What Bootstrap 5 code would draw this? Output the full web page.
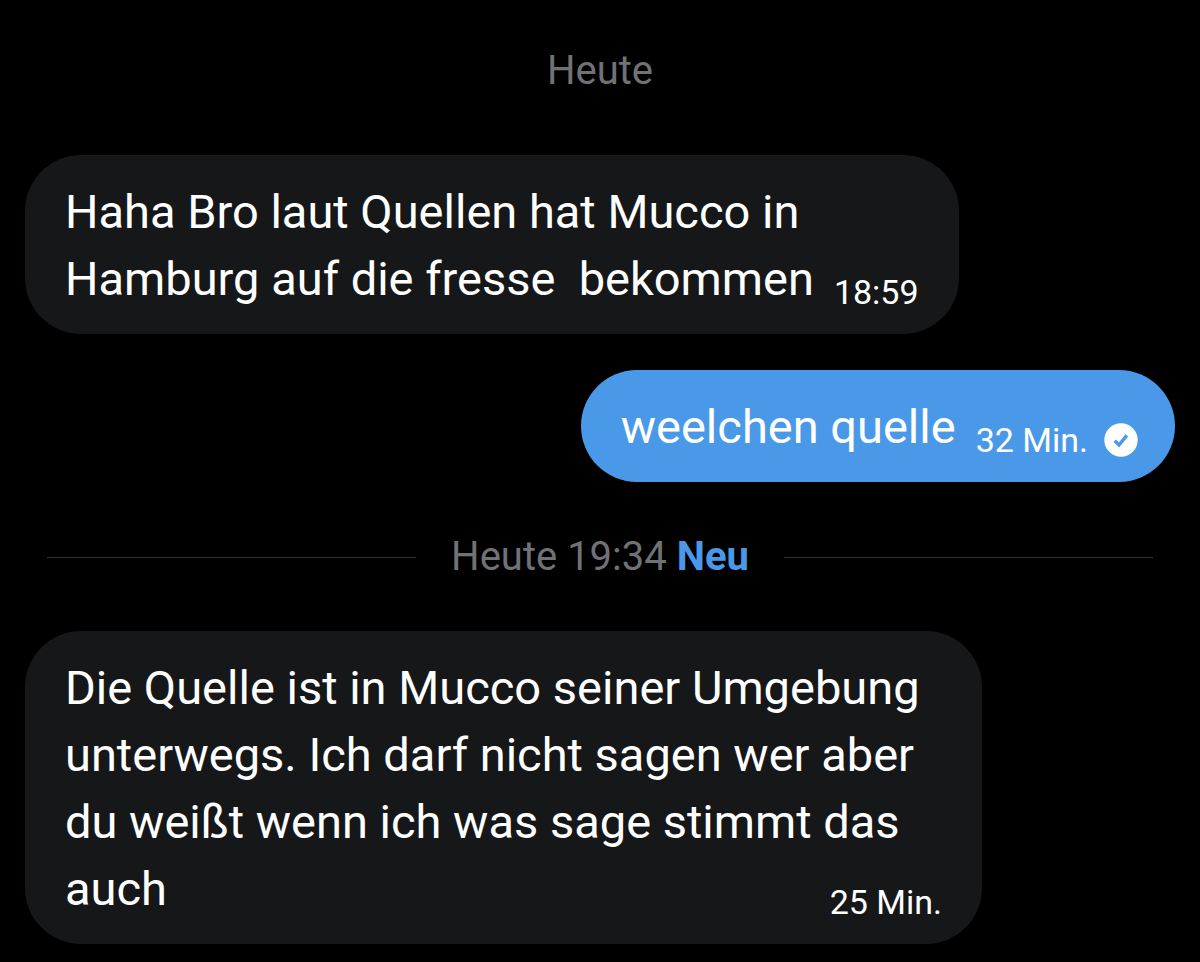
<!DOCTYPE html>
<html lang="de">
<head>
<meta charset="utf-8">
<meta name="viewport" content="width=device-width, initial-scale=1">
<title>Nachrichten</title>
<link href="https://cdn.jsdelivr.net/npm/bootstrap@5.3.0/dist/css/bootstrap.min.css" rel="stylesheet">
<style>
  body { background: #000; color: #fff; font-family: Roboto, "Liberation Sans", sans-serif; }
  .chat { padding: 47px 25px 18px; }
  .day-label { color: #717276; font-size: 40px; line-height: 48px; }
  .day-first { margin-bottom: 60px; }
  .day-new { margin: 51px 22px 50px; gap: 35px; }
  .day-new hr { border-top: 1px solid #2f3133; opacity: 1; }
  .new-tag { color: #4a99e9; }
  .bubble { max-width: calc(100% - 193px); padding: 23px 40px 22px; border-radius: 56px; font-size: 47px; line-height: 67px; }
  .bubble-in { background: #161719; }
  .bubble-out { background: #4a99e9; margin-top: 36px; padding-right: 37px; }
  .last-line { column-gap: 20px; }
  .stamp { font-size: 34px; line-height: 40px; }
  .stamp svg { width: 34px; height: 34px; margin-left: 16px; }
</style>
</head>
<body>
<main class="chat d-flex flex-column">
  <div class="day-label day-first text-center">Heute</div>

  <div class="bubble bubble-in align-self-start">
    <div>Haha Bro laut Quellen hat Mucco in</div>
    <div class="last-line d-flex justify-content-between align-items-end">
      <span>Hamburg auf die fresse&nbsp; bekommen</span>
      <time class="stamp">18:59</time>
    </div>
  </div>

  <div class="bubble bubble-out align-self-end">
    <div class="last-line d-flex justify-content-between align-items-end">
      <span>weelchen quelle</span>
      <span class="stamp d-flex align-items-center"><time>32 Min.</time>
        <svg viewBox="0 0 34 34" role="img" aria-label="Gesendet"><circle cx="17" cy="17" r="16.7" fill="#fff"/><path d="M10.7 17.6l4.3 4.4 7.8-9.6" fill="none" stroke="#4a99e9" stroke-width="3.4"/></svg>
      </span>
    </div>
  </div>

  <div class="day-label day-new d-flex align-items-center">
    <hr class="flex-fill m-0">
    <div>Heute 19:34 <span class="new-tag fw-bold">Neu</span></div>
    <hr class="flex-fill m-0">
  </div>

  <div class="bubble bubble-in align-self-start">
    <div>Die Quelle ist in Mucco seiner Umgebung unterwegs. Ich darf nicht sagen wer aber du weißt wenn ich was sage stimmt das</div>
    <div class="last-line d-flex justify-content-between align-items-end">
      <span>auch</span>
      <time class="stamp">25 Min.</time>
    </div>
  </div>
</main>
<script src="https://cdn.jsdelivr.net/npm/bootstrap@5.3.0/dist/js/bootstrap.bundle.min.js"></script>
</body>
</html>
